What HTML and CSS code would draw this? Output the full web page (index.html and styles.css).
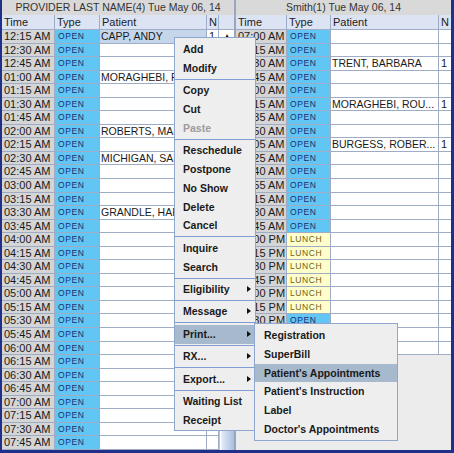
FILE: index.html
```html
<!DOCTYPE html>
<html lang="en">
<head>
    <meta charset="UTF-8">
    <title>Schedule</title>
    <link rel="stylesheet" href="styles.css">
</head>
<body>
    <div class="sched">
        <div class="panel left">
            <div class="title">PROVIDER LAST NAME(4) Tue May 06, 14</div>
            <div class="row head">
                <div class="c tm">Time</div><div class="c ty">Type</div><div class="c pt">Patient</div><div class="c n">N</div><div class="c bar"></div>
            </div>
            <div id="left-rows"></div>
        </div>
        <div class="panel right">
            <div class="title">Smith(1) Tue May 06, 14</div>
            <div class="row head">
                <div class="c tm">Time</div><div class="c ty">Type</div><div class="c pt">Patient</div><div class="c n">N</div>
            </div>
            <div id="right-rows"></div>
        </div>

        <div class="menu">
            <div class="mi">Add</div>
            <div class="mi">Modify</div>
            <div class="sep"></div>
            <div class="mi">Copy</div>
            <div class="mi">Cut</div>
            <div class="mi off">Paste</div>
            <div class="sep"></div>
            <div class="mi">Reschedule</div>
            <div class="mi">Postpone</div>
            <div class="mi">No Show</div>
            <div class="mi">Delete</div>
            <div class="mi">Cancel</div>
            <div class="sep"></div>
            <div class="mi">Inquire</div>
            <div class="mi">Search</div>
            <div class="sep"></div>
            <div class="mi sub">Eligibility</div>
            <div class="sep"></div>
            <div class="mi sub">Message</div>
            <div class="sep"></div>
            <div class="mi sub hot">Print...</div>
            <div class="sep"></div>
            <div class="mi sub">RX...</div>
            <div class="sep"></div>
            <div class="mi sub">Export...</div>
            <div class="sep"></div>
            <div class="mi">Waiting List</div>
            <div class="mi">Receipt</div>
        </div>

        <div class="menu submenu">
            <div class="mi">Registration</div>
            <div class="mi">SuperBill</div>
            <div class="mi hot">Patient's Appointments</div>
            <div class="mi">Patient's Instruction</div>
            <div class="mi">Label</div>
            <div class="mi">Doctor's Appointments</div>
        </div>
    </div>

    <script>
        // left column: 12:15 AM .. 07:45 AM, every 15 min
        const leftPatients = {
            '12:15 AM': ['CAPP, ANDY', '1'],
            '01:00 AM': ['MORAGHEBI, RO...', '1'],
            '02:00 AM': ['ROBERTS, MARY', '1'],
            '02:30 AM': ['MICHIGAN, SARA', '1'],
            '03:30 AM': ['GRANDLE, HARRY', '1']
        };

        const rightSlots = [
            ['07:00 AM', 'OPEN', ''], ['07:15 AM', 'OPEN', ''], ['07:30 AM', 'OPEN', 'TRENT, BARBARA'],
            ['07:45 AM', 'OPEN', ''], ['08:00 AM', 'OPEN', ''], ['08:15 AM', 'OPEN', 'MORAGHEBI, ROU...'],
            ['08:35 AM', 'OPEN', ''], ['08:50 AM', 'OPEN', ''], ['09:05 AM', 'OPEN', 'BURGESS, ROBER...'],
            ['09:25 AM', 'OPEN', ''], ['09:40 AM', 'OPEN', ''], ['09:55 AM', 'OPEN', ''],
            ['10:15 AM', 'OPEN', ''], ['10:30 AM', 'OPEN', ''], ['10:45 AM', 'OPEN', ''],
            ['12:00 PM', 'LUNCH', ''], ['12:15 PM', 'LUNCH', ''], ['12:30 PM', 'LUNCH', ''],
            ['12:45 PM', 'LUNCH', ''], ['01:00 PM', 'LUNCH', ''], ['01:15 PM', 'LUNCH', ''],
            ['01:30 PM', 'OPEN', ''], ['01:45 PM', 'OPEN', ''], ['02:00 PM', 'OPEN', '']
        ];

        function cell(cls, text) {
            const d = document.createElement('div');
            d.className = 'c ' + cls;
            d.textContent = text || '';
            return d;
        }

        const left = document.getElementById('left-rows');
        for (let i = 0; i < 31; i++) {
            const mins = 15 + i * 15;
            const h = Math.floor(mins / 60);
            const m = mins % 60;
            const label = String(h === 0 ? 12 : h).padStart(2, '0') + ':' + String(m).padStart(2, '0') + ' AM';
            const p = leftPatients[label] || ['', ''];
            const row = document.createElement('div');
            row.className = 'row' + (i === 0 ? ' sel' : '');
            row.appendChild(cell('tm', label));
            row.appendChild(cell('ty open', 'OPEN'));
            row.appendChild(cell('pt', p[0]));
            row.appendChild(cell('n', p[1]));
            row.appendChild(cell(i === 0 ? 'bar up' : 'bar trk', i === 0 ? '▴' : ''));
            left.appendChild(row);
        }

        const right = document.getElementById('right-rows');
        rightSlots.forEach(s => {
            const row = document.createElement('div');
            row.className = 'row';
            row.appendChild(cell('tm', s[0]));
            row.appendChild(cell('ty ' + s[1].toLowerCase(), s[1]));
            row.appendChild(cell('pt', s[2]));
            row.appendChild(cell('n', s[2] ? '1' : ''));
            right.appendChild(row);
        });
    </script>
</body>
</html>
```

FILE: styles.css
```css
body {
    margin: 0;
    font-family: "Liberation Sans", Arial, sans-serif;
    font-size: 11px;
    color: #1a1a1a;
    background: #ececec;
}
.sched {
    position: relative;
    display: flex;
    width: 454px;
    height: 453px;
    box-sizing: border-box;
    border: solid #1f2f8a;
    border-width: 0 3px 3px 2px;
    background: #ececec;
    overflow: hidden;
}
.panel {
    display: flex;
    flex-direction: column;
    box-sizing: border-box;
}
.panel.left {
    width: 232px;
    background: #fff;
}
.panel.right {
    width: 217px;
    border-left: 2px solid #9aa6bd;
}
.title {
    height: 15px;
    line-height: 15px;
    background: #d9d9d9;
    color: #333;
    font-size: 10.5px;
    text-align: center;
    white-space: nowrap;
}
.row {
    display: flex;
    height: 13.55px;
}
.row.head {
    height: 15px;
    background: #dce4f4;
}
.c {
    box-sizing: border-box;
    border-right: 1px solid #9eacc6;
    border-bottom: 1px solid #9eacc6;
    padding-left: 2px;
    overflow: hidden;
    white-space: nowrap;
    line-height: 12.5px;
}
.head .c {
    line-height: 14px;
    color: #222;
}
.left .tm { width: 53px; }
.left .ty { width: 45px; }
.left .pt { width: 107px; }
.left .n { width: 12px; }
.left .bar { width: 15px; border-right: none; }
.right .tm { width: 51px; }
.right .ty { width: 44px; }
.right .pt { width: 108px; }
.right .n { width: 12px; border-right: none; }
.row:not(.head) .tm {
    background: #d5d5d5;
}
.row:not(.head) .pt,
.row:not(.head) .n {
    background: #fff;
}
.row:not(.head) .pt {
    font-size: 10.5px;
    padding-left: 1px;
}
.row.sel .pt {
    background: #c6d6ea;
}
.ty.open {
    background: #62c6f5;
    color: #1b2f6e;
    font-size: 8.5px;
    letter-spacing: 0.6px;
    padding-left: 3px;
}
.ty.lunch {
    background: #ffffcc;
    color: #6d5d16;
    font-size: 8.5px;
    letter-spacing: 0.6px;
    padding-left: 3px;
}
.bar.up {
    background: #fff;
    font-size: 8px;
    text-align: center;
    padding: 0;
}
.bar.trk {
    border-bottom: none;
    border-left: 1px solid #b9c6da;
    background: linear-gradient(to right, #fff 0, #fff 1px, #dfe9f6 2px, #a9bfdf 14px);
}
.menu {
    position: absolute;
    left: 172px;
    top: 37px;
    width: 82px;
    box-sizing: border-box;
    background: #eeeeee;
    border: 1px solid #8fa6cf;
    padding: 2px 0 1px;
}
.submenu {
    left: 252px;
    top: 323px;
    width: 144px;
}
.mi {
    position: relative;
    height: 18.8px;
    line-height: 18.8px;
    padding-left: 8px;
    font-size: 10.5px;
    font-weight: bold;
    color: #1a1a1a;
    white-space: nowrap;
}
.submenu .mi {
    padding-left: 9px;
}
.mi.off {
    color: #9c9c9c;
}
.mi.hot {
    background: #a6b9cd;
}
.mi.sub::after {
    content: "";
    position: absolute;
    right: 4px;
    top: 6px;
    border-left: 4px solid #111;
    border-top: 3.5px solid transparent;
    border-bottom: 3.5px solid transparent;
}
.sep {
    height: 1px;
    margin: 1.3px 0;
    background: #7f9dd2;
}
```
